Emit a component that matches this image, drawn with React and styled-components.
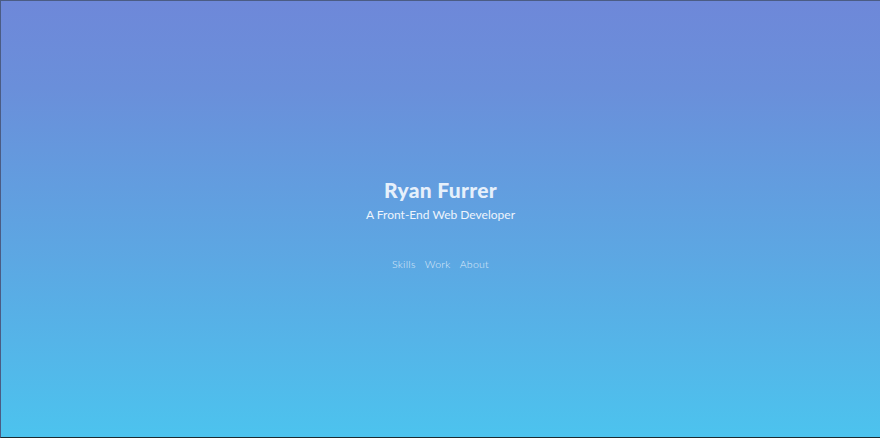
import React from "react";
import styled, { createGlobalStyle } from "styled-components";

const Global = createGlobalStyle`
  html, body { margin: 0; padding: 0; }
  body { font-family: "Lato", "Open Sans", sans-serif; }
`;

const Hero = styled.main`
  box-sizing: border-box;
  width: 880px;
  height: 438px;
  border-top: 1px solid #4b5c84;
  border-left: 1px solid #4b5c84;
  border-bottom: 1px solid #1c2a30;
  background: linear-gradient(180deg, #6e88d9 0%, #6a8fda 20%, #5ca8e3 60%, #4cc3ee 100%);
  display: flex;
  flex-direction: column;
  align-items: center;
  padding-top: 175px;
`;

const Name = styled.h1`
  margin: 0;
  font-family: "Lato", sans-serif;
  font-weight: 900;
  font-size: 21px;
  letter-spacing: 0.3px;
  color: #e6f0fb;
  line-height: 28px;
`;

const Tagline = styled.p`
  margin: 1px 0 0;
  font-family: "Lato", sans-serif;
  font-weight: 400;
  font-size: 12px;
  color: #eef4fc;
  line-height: 19px;
`;

const Nav = styled.nav`
  margin-top: 34px;
  display: flex;
  gap: 9px;
`;

const NavLink = styled.a`
  font-family: "Lato", sans-serif;
  font-weight: 300;
  font-size: 10.5px;
  color: rgba(255, 255, 255, 0.8);
  text-decoration: none;
  letter-spacing: 0.3px;
`;

export default function App() {
  return (
    <>
      <Global />
      <Hero>
        <Name>Ryan Furrer</Name>
        <Tagline>A Front-End Web Developer</Tagline>
        <Nav>
          <NavLink href="#skills">Skills</NavLink>
          <NavLink href="#work">Work</NavLink>
          <NavLink href="#about">About</NavLink>
        </Nav>
      </Hero>
    </>
  );
}
